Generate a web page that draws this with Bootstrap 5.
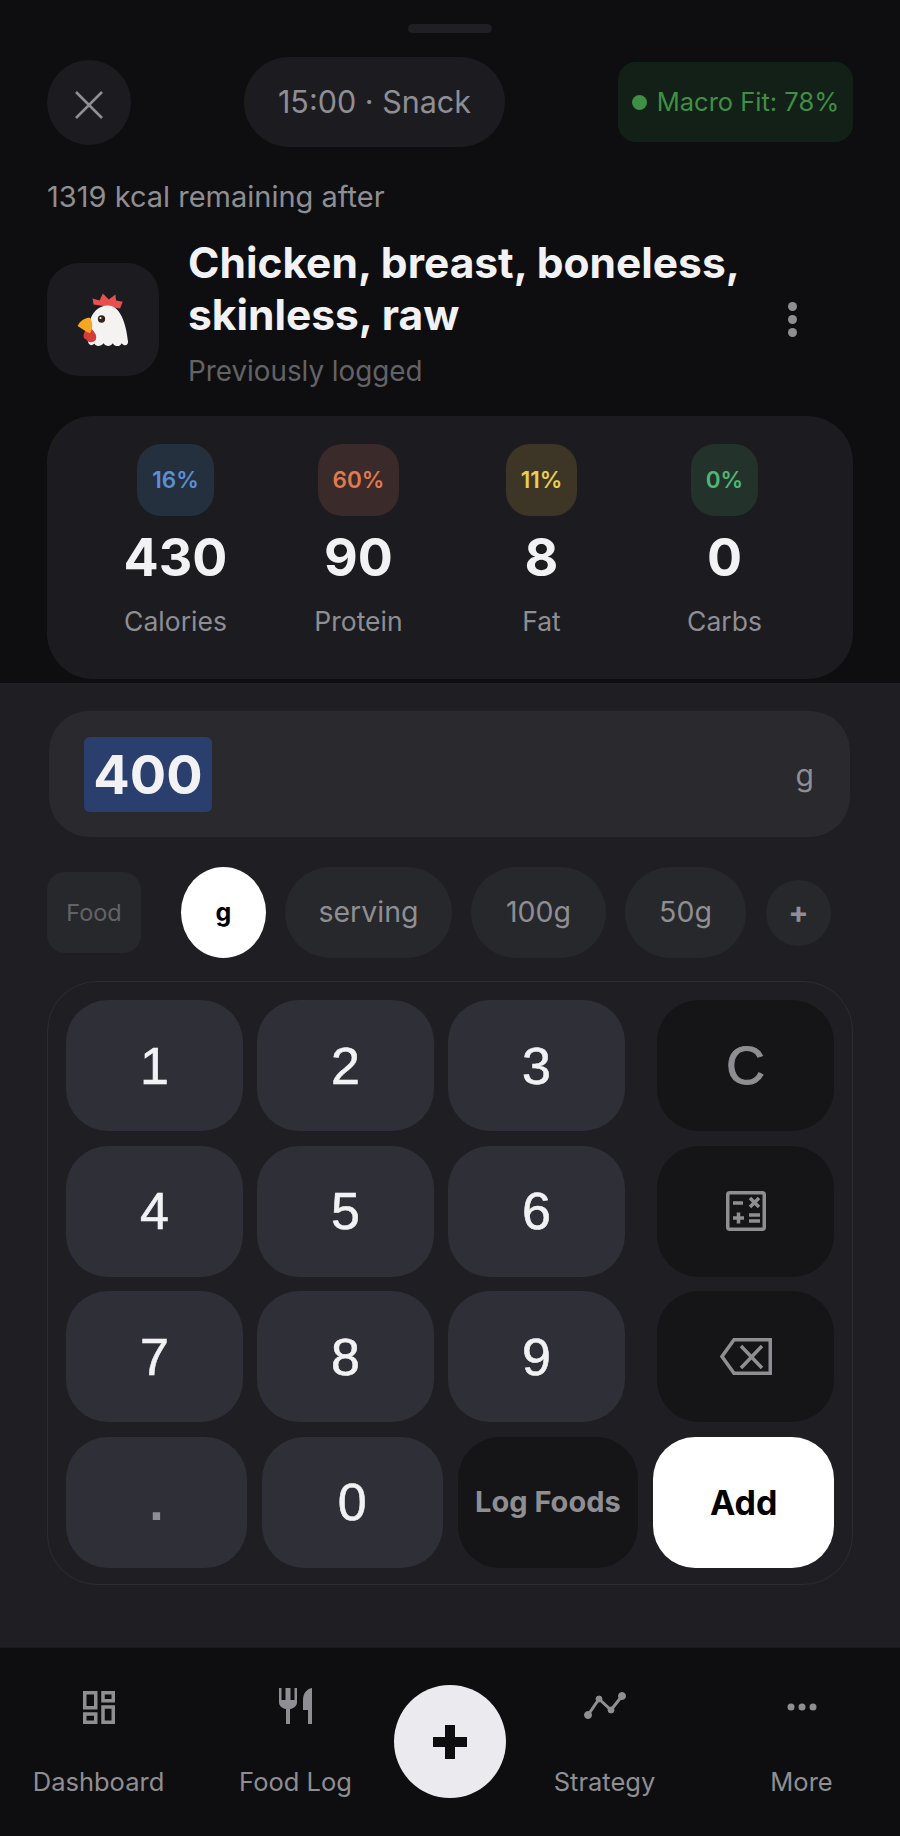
<!DOCTYPE html>
<html lang="en">
<head>
    <meta charset="UTF-8">
    <meta name="viewport" content="width=device-width, initial-scale=1.0">
    <title>Add Food</title>
    <link href="https://cdn.jsdelivr.net/npm/bootstrap@5.3.3/dist/css/bootstrap.min.css" rel="stylesheet">
    <style>
        body { background: #0e0e11; font-family: Inter, "Liberation Sans", sans-serif; color: #8e8e93; }
        .screen { width: 900px; height: 1836px; overflow: hidden; }

        /* top part */
        .top-part { height: 683px; padding: 24px 47px 0; }
        .drag-handle { width: 84px; height: 9px; background: #1f1f24; border-radius: 5px; }
        .head-row { margin-top: 24px; height: 90px; }
        .close-btn { width: 84px; height: 85px; background: #1c1c20; padding-top: 6px; }
        .time-pill { width: 261px; height: 90px; background: #1c1c20; font-size: 30.5px; color: #8e8e93; border-radius: 45px; }
        .fit-tag { width: 235px; height: 80px; background: #132017; color: #3f8f45; font-size: 25.5px; border-radius: 18px; gap: 10px; }
        .fit-dot { width: 15px; height: 15px; background: #3f8f45; }
        .remain-text { margin-top: 34px; font-size: 29px; line-height: 32px; }
        .food-row { margin-top: 24px; }
        .food-pic { width: 112px; height: 113px; background: #1c1c20; border-radius: 32px; }
        .food-info { padding: 0 0 14px 29px; width: 602px; }
        .food-name { font-size: 42.5px; line-height: 52px; font-weight: 700; color: #f2f2f5; margin: 0; }
        .food-sub { font-size: 27.8px; line-height: 34px; margin-top: 13px; color: #636366; }
        .more-dots { margin-left: 27px; gap: 4px; }
        .more-dots i { display: block; width: 9px; height: 9px; border-radius: 50%; background: #8e8e93; }
        .stats-box { margin-top: 14px; height: 263px; background: #1c1c20; border-radius: 46px; padding: 28px 36px 0 37px; }
        .stat-item { width: 183px; }
        .pct-tag { height: 72px; padding: 0 15px; border-radius: 24px; font-size: 22.5px; font-weight: 600; }
        .pct-blue { background: #25303f; color: #5b8fd6; }
        .pct-red { background: #3b2a2a; color: #e07a50; }
        .pct-yellow { background: #3d3626; color: #e8cf52; }
        .pct-green { background: #23332c; color: #4fb774; }
        .stat-num { margin-top: 12px; font-size: 52px; line-height: 60px; font-weight: 700; color: #f2f2f5; }
        .stat-label { margin-top: 16px; font-size: 26.5px; line-height: 34px; color: #8e8e93; }

        /* lower panel */
        .low-panel { height: 964px; background: #1e1e23; padding: 28px 47px 0; }
        .amount-box { height: 126px; margin: 0 3px 0 2px; background: #29292e; border-radius: 40px; padding: 0 36px 0 35px; }
        .amount-sel { height: 75px; width: 128px; background: #2a3f6e; border-radius: 6px; font-size: 54px; font-weight: 700; color: #f2f2f5; }
        .amount-unit { font-size: 30px; padding-top: 2px; }
        .unit-row { margin-top: 30px; height: 91px; }
        .unit-chip { height: 91px; background: #27282c; color: #8e8e93; font-size: 28.5px; border: 0; border-radius: 46px; padding: 0; }
        .chip-food { width: 94px; height: 81px; border-radius: 18px; font-size: 23.5px; color: #636366; margin-right: 40px; }
        .chip-g { width: 85px; background: #fff; color: #000; font-size: 25px; font-weight: 700; margin-right: 19px; border-radius: 50%; }
        .chip-serving { width: 167px; margin-right: 19px; }
        .chip-100 { width: 135px; margin-right: 19px; }
        .chip-50 { width: 121px; margin-right: 20px; }
        .chip-plus { width: 65px; height: 66px; border-radius: 50%; font-size: 30px; font-weight: 700; }
        .key-box { margin-top: 23px; height: 604px; border: 1px solid #2c2c31; border-radius: 50px; padding: 18px; gap: 14.5px; }
        .key-row { gap: 14px; height: 131px; }
        .pad-key { height: 131px; width: 177px; background: #2f3037; color: #f2f2f5; font-family: "Liberation Sans", sans-serif; font-size: 52px; font-weight: 400; -webkit-text-stroke: 0.6px #f2f2f5; border: 0; border-radius: 42px; padding: 0; }
        .pad-key.dark-key { background: #151517; color: #8e8e93; margin-left: 18px; -webkit-text-stroke: 0; }
        .pad-key.clear-key { font-size: 54px; -webkit-text-stroke: 1px #8e8e93; }
        .last-row { gap: 15px; }
        .last-row .pad-key { width: 181px; }
        .last-row .dark-key { margin-left: 0; font-family: Inter, sans-serif; font-size: 29px; font-weight: 700; }
        .pad-key.dot-key { color: #8e8e93; font-weight: 700; -webkit-text-stroke: 0; }
        .pad-key.add-key { background: #fff; color: #000; font-family: Inter, sans-serif; font-size: 34px; font-weight: 700; -webkit-text-stroke: 0; }

        /* bottom nav */
        .bottom-nav { height: 189px; display: grid; grid-template-columns: 1fr 1fr 112px 1fr 1fr; border-top: 1px solid #1a1a1e; background: #0e0e11; }
        .nav-cell { position: relative; height: 188px; font-size: 25.5px; }
        .nav-ico { height: 76px; }
        .nav-name { line-height: 32px; margin-top: 42px; }
        .plus-btn { width: 112px; height: 113px; margin-top: 37px; background: #ebebef; }
    </style>
</head>
<body>
    <div class="screen d-flex flex-column">
        <div class="top-part">
            <div class="drag-handle mx-auto"></div>
            <div class="head-row d-flex justify-content-between align-items-center">
                <div class="close-btn rounded-circle d-flex justify-content-center align-items-center">
                    <svg width="30" height="28" viewBox="0 0 30 28"><path d="M2 1 28 27M28 1 2 27" stroke="#8e8e93" stroke-width="2.6" fill="none"/></svg>
                </div>
                <div class="time-pill d-flex justify-content-center align-items-center">15:00 · Snack</div>
                <div class="fit-tag d-flex justify-content-center align-items-center">
                    <span class="fit-dot rounded-circle"></span><span>Macro Fit: 78%</span>
                </div>
            </div>
            <div class="remain-text">1319 kcal remaining after</div>
            <div class="food-row d-flex align-items-center">
                <div class="food-pic d-flex justify-content-center align-items-center flex-shrink-0">
                    <svg width="52" height="56" viewBox="108 123 157 168">
                        <path d="M158 160 155 142 176 148 186 127 204 145 224 130 226 148 246 152 238 172Z" fill="#ea4f4f"/>
                        <path d="M141 270C136 215 155 165 200 163 238 162 256 215 262 272 263 285 250 287 243 277 237 289 222 288 216 277 209 288 196 288 188 277 180 288 165 288 160 278 153 287 142 284 141 270Z" fill="#f4f3f2"/>
                        <path d="M133 240C126 250 125 262 136 266 140 276 158 278 165 266 170 252 158 240 150 232Z" fill="#d63a3a"/>
                        <path d="M110 225C118 208 132 200 147 200 157 214 156 232 147 247 135 243 122 232 110 225Z" fill="#f5a623"/>
                        <circle cx="182" cy="204" r="11" fill="#33231c"/>
                        <circle cx="179" cy="201" r="3" fill="#fff"/>
                    </svg>
                </div>
                <div class="food-info">
                    <h1 class="food-name">Chicken, breast, boneless, skinless, raw</h1>
                    <div class="food-sub">Previously logged</div>
                </div>
                <div class="more-dots d-flex flex-column"><i></i><i></i><i></i></div>
            </div>
            <div class="stats-box d-flex">
                <div class="stat-item d-flex flex-column align-items-center">
                    <div class="pct-tag pct-blue d-flex align-items-center">16%</div>
                    <div class="stat-num">430</div>
                    <div class="stat-label">Calories</div>
                </div>
                <div class="stat-item d-flex flex-column align-items-center">
                    <div class="pct-tag pct-red d-flex align-items-center">60%</div>
                    <div class="stat-num">90</div>
                    <div class="stat-label">Protein</div>
                </div>
                <div class="stat-item d-flex flex-column align-items-center">
                    <div class="pct-tag pct-yellow d-flex align-items-center">11%</div>
                    <div class="stat-num">8</div>
                    <div class="stat-label">Fat</div>
                </div>
                <div class="stat-item d-flex flex-column align-items-center">
                    <div class="pct-tag pct-green d-flex align-items-center">0%</div>
                    <div class="stat-num">0</div>
                    <div class="stat-label">Carbs</div>
                </div>
            </div>
        </div>

        <div class="low-panel">
            <div class="amount-box d-flex justify-content-between align-items-center">
                <div class="amount-sel d-flex justify-content-center align-items-center">400</div>
                <div class="amount-unit">g</div>
            </div>
            <div class="unit-row d-flex align-items-center">
                <button type="button" class="btn unit-chip chip-food">Food</button>
                <button type="button" class="btn unit-chip chip-g">g</button>
                <button type="button" class="btn unit-chip chip-serving">serving</button>
                <button type="button" class="btn unit-chip chip-100">100g</button>
                <button type="button" class="btn unit-chip chip-50">50g</button>
                <button type="button" class="btn unit-chip chip-plus">+</button>
            </div>
            <div class="key-box d-flex flex-column">
                <div class="key-row d-flex">
                    <button type="button" class="btn pad-key">1</button>
                    <button type="button" class="btn pad-key">2</button>
                    <button type="button" class="btn pad-key">3</button>
                    <button type="button" class="btn pad-key dark-key clear-key">C</button>
                </div>
                <div class="key-row d-flex">
                    <button type="button" class="btn pad-key">4</button>
                    <button type="button" class="btn pad-key">5</button>
                    <button type="button" class="btn pad-key">6</button>
                    <button type="button" class="btn pad-key dark-key">
                        <svg width="40" height="40" viewBox="0 0 40 40" class="d-block mx-auto" fill="none" stroke="#8e8e93" stroke-width="3.500">
                            <rect x="1.750" y="1.750" width="36.500" height="36.500" rx="2"/>
                            <path d="M7 12H17M24 7 33 16M33 7 24 16M7 27H18M12.500 21.500V32.500M23 24H34M23 30H34"/>
                        </svg>
                    </button>
                </div>
                <div class="key-row d-flex">
                    <button type="button" class="btn pad-key">7</button>
                    <button type="button" class="btn pad-key">8</button>
                    <button type="button" class="btn pad-key">9</button>
                    <button type="button" class="btn pad-key dark-key">
                        <svg width="52" height="37" viewBox="0 0 52 37" class="d-block mx-auto" fill="none" stroke="#8e8e93" stroke-width="3.500">
                            <path d="M14 1.750H50.250V35.250H14L2 18.500Z"/>
                            <path d="M21 8 42 30M42 8 21 30"/>
                        </svg>
                    </button>
                </div>
                <div class="key-row last-row d-flex">
                    <button type="button" class="btn pad-key dot-key">.</button>
                    <button type="button" class="btn pad-key">0</button>
                    <button type="button" class="btn pad-key dark-key">Log Foods</button>
                    <button type="button" class="btn pad-key add-key">Add</button>
                </div>
            </div>
        </div>

        <div class="bottom-nav">
            <div class="nav-cell text-center">
                <div class="nav-ico d-flex justify-content-center align-items-end">
                    <svg width="32" height="33" viewBox="0 0 32 33" fill="none" stroke="#8e8e93" stroke-width="3.500">
                        <rect x="1.750" y="1.750" width="11" height="15"/><rect x="20" y="1.750" width="10.250" height="8"/>
                        <rect x="1.750" y="23" width="11" height="8.250"/><rect x="20" y="16" width="10.250" height="15.250"/>
                    </svg>
                </div>
                <div class="nav-name">Dashboard</div>
            </div>
            <div class="nav-cell text-center">
                <div class="nav-ico d-flex justify-content-center align-items-end">
                    <svg width="33" height="36" viewBox="0 0 33 36" fill="#8e8e93">
                        <path d="M0 0H2.500V12H6.500V0H11.500V12H15.500V0H18V14C18 18 15 20.500 11 21V36H7V21C3 20.500 0 18 0 14Z"/>
                        <path d="M33 0V36H29V22H24V12C24 6 27 1 33 0Z"/>
                    </svg>
                </div>
                <div class="nav-name">Food Log</div>
            </div>
            <div class="nav-cell">
                <div class="plus-btn rounded-circle d-flex justify-content-center align-items-center">
                    <svg width="34" height="34" viewBox="0 0 34 34"><path d="M12 0H22V12H34V22H22V34H12V22H0V12H12Z" fill="#0e0e11"/></svg>
                </div>
            </div>
            <div class="nav-cell text-center">
                <div class="nav-ico d-flex justify-content-center align-items-end">
                    <svg width="42" height="33" viewBox="0 0 42 33" fill="#8e8e93" stroke="#8e8e93">
                        <path d="M4 24 15 8 27 19 38 5" fill="none" stroke-width="3"/>
                        <circle cx="4" cy="24" r="3.500"/><circle cx="15" cy="8" r="3"/><circle cx="27" cy="19" r="3"/><circle cx="38" cy="5" r="3.500"/>
                    </svg>
                </div>
                <div class="nav-name">Strategy</div>
            </div>
            <div class="nav-cell text-center">
                <div class="nav-ico d-flex justify-content-center align-items-end">
                    <svg width="30" height="33" viewBox="0 0 30 33" fill="#8e8e93">
                        <circle cx="4" cy="16" r="3.500"/><circle cx="15" cy="16" r="3.500"/><circle cx="26" cy="16" r="3.500"/>
                    </svg>
                </div>
                <div class="nav-name">More</div>
            </div>
        </div>
    </div>
    <script src="https://cdn.jsdelivr.net/npm/bootstrap@5.3.3/dist/js/bootstrap.bundle.min.js"></script>
</body>
</html>
